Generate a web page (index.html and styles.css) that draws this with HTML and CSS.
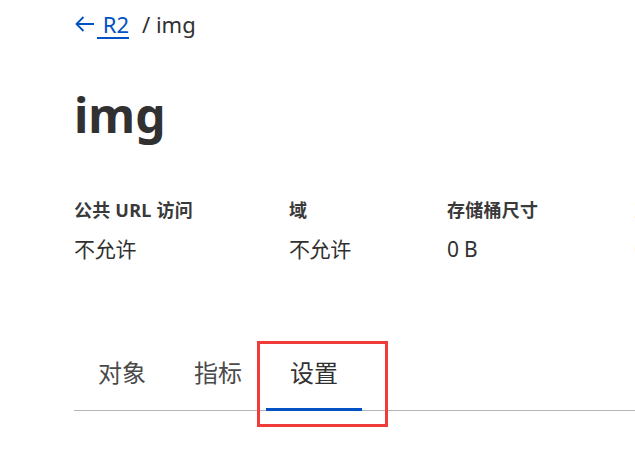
FILE: index.html
```html
<!DOCTYPE html>
<html lang="zh-CN">
<head>
<meta charset="utf-8">
<link rel="stylesheet" href="styles.css">
</head>
<body>
<div class="page">
  <nav class="crumbs">
    <svg class="back" width="20" height="16" viewBox="0 0 20 16"><path d="M1.5 8H19M8.5 1L1.5 8L8.5 15" fill="none" stroke="#0051c3" stroke-width="1.8"/></svg>
    <a class="link" href="#">&nbsp;R2</a>
    <span class="sep">/ img</span>
  </nav>
  <h1 class="title">img</h1>
  <div class="stats">
    <div class="stat"><div class="label">公共 URL 访问</div><div class="value">不允许</div></div>
    <div class="stat"><div class="label">域</div><div class="value">不允许</div></div>
    <div class="stat"><div class="label">存储桶尺寸</div><div class="value">0 B</div></div>
    <div class="stat"><div class="label">对象</div><div class="value">0</div></div>
  </div>
  <div class="tabs">
    <div class="tab">对象</div>
    <div class="tab">指标</div>
    <div class="tab active">设置</div>
  </div>
</div>
<div class="highlight"></div>
</body>
</html>
```
FILE: styles.css
```css
html, body {
  margin: 0;
  padding: 0;
  background: #fff;
  overflow: hidden;
}
body {
  width: 635px;
  height: 462px;
  position: relative;
  font-family: "Noto Sans", "Noto Sans CJK SC", sans-serif;
  color: #313131;
}
.page {
  padding-left: 74px;
  overflow: hidden;
}
.crumbs {
  display: flex;
  align-items: center;
  height: 48px;
  font-size: 22px;
}
.back {
  margin-left: 1px;
  margin-right: 2px;
}
.link {
  color: #0051c3;
  text-decoration: none;
  border-bottom: 2px solid #0051c3;
  line-height: 26px;
  margin-top: 2px;
}
.sep {
  margin-left: 13px;
  color: #313131;
}
.title {
  margin: 34px 0 0 0;
  font-size: 48px;
  line-height: 66px;
  font-weight: 700;
  color: #313131;
}
.stats {
  display: flex;
  gap: 96px;
  margin-top: 50px;
  white-space: nowrap;
}
.stat {
  flex: none;
}
.label {
  font-size: 18px;
  font-weight: 700;
  line-height: 24px;
  letter-spacing: 0.23px;
  color: #3a3a3a;
}
.value {
  font-size: 21px;
  line-height: 28px;
  letter-spacing: -0.3px;
  margin-top: 13px;
  color: #313131;
}
.tabs {
  display: flex;
  margin-top: 91px;
  border-bottom: 1px solid #b6b6b6;
  width: 561px;
}
.tab {
  width: 96px;
  text-align: center;
  font-size: 24px;
  line-height: 30px;
  padding: 4px 0 20px;
  color: #4a4a4a;
  margin-bottom: -1px;
  border-bottom: 3px solid transparent;
}
.tab.active {
  border-bottom-color: #0051c3;
  color: #313131;
}
.highlight {
  position: absolute;
  left: 257px;
  top: 341px;
  width: 125px;
  height: 80px;
  border: 3px solid #f03b3b;
}
```
